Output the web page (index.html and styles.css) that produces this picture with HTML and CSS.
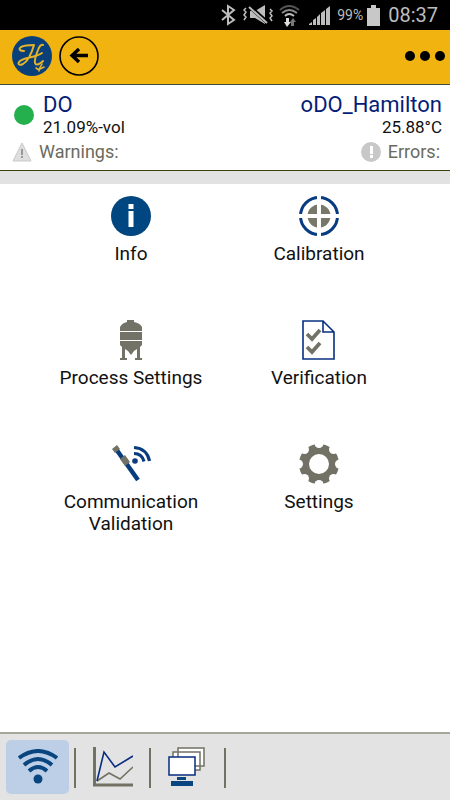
FILE: index.html
```html
<!DOCTYPE html>
<html lang="en">
<head>
<meta charset="utf-8">
<meta name="viewport" content="width=device-width, initial-scale=1">
<title>oDO_Hamilton</title>
<link rel="stylesheet" href="styles.css">
</head>
<body>
<div class="status">
  <svg width="118" height="24" viewBox="218 3 118 24" aria-hidden="true">
    <path d="M221 10l12 10-6 4V6l6 4-12 10" fill="none" stroke="#bdbdbd" stroke-width="2"/>
    <g fill="none" stroke="#bdbdbd" stroke-width="1.5">
      <path d="M245 8l-2 2 2 2-2 3 2 2-2 3M269 9l2 2-2 2 2 3-2 2 2 3"/>
    </g>
    <path d="M249 11h5l10-6v19l-10-6h-5z" fill="#bdbdbd"/>
    <path d="M248 6l19 17" stroke="#000" stroke-width="4"/>
    <path d="M248 7l18 16" stroke="#bdbdbd" stroke-width="2"/>
    <g fill="none" stroke-width="2">
      <path d="M279 10q9-8 19 0" stroke="#555"/>
      <path d="M281 13q7-6 15 0" stroke="#8a8a8a"/>
      <path d="M284 16q4-4 9 0" stroke="#bdbdbd"/>
    </g>
    <path d="M285 18h3v4h2l-4 5-3-5h2z" fill="#ddd"/>
    <path d="M290 26v-4h-1l3-4 3 4h-2v4z" fill="#777"/>
    <path d="M308 25v-1l3-2v3zM312 25v-5l3-2v7zM316 25v-8l3-3v11zM320 25V13l4-3v15zM325 25V9l4-3v19z" fill="#bdbdbd"/>
  </svg>
  <span class="percent">99%</span>
  <svg width="13" height="21" viewBox="0 0 13 21" aria-hidden="true"><path d="M4 0h5v3h4v18H0V3h4z" fill="#c8c8c8"/></svg>
  <time class="clock">08:37</time>
</div>
<header class="bar">
  <button class="round" aria-label="Home">
    <svg width="40" height="40" viewBox="0 0 40 40">
      <circle cx="20" cy="20" r="20" fill="#0a4079"/>
      <g fill="none" stroke="#e2b32b" stroke-width="2" stroke-linecap="round" stroke-linejoin="round">
        <path d="M12 15C8 15 6 13 9 11c4-2 9-2 13-2-2 7-6 16-11 19-4 2-6 0-3-3 5-4 15-3 22-8"/>
        <path d="M31 9c-2-1-4 2-5 5-2 5-4 10-3 13s5 1 8-2"/>
        <path d="M27 35c0-3 2-5 3-7M27 34l-3-2M28 33l4-2" stroke-width="1.600"/>
      </g>
    </svg>
  </button>
  <button class="round back" aria-label="Back">
    <svg width="40" height="40" viewBox="0 0 40 40">
      <circle cx="20" cy="20" r="19" fill="none" stroke="#000" stroke-width="1.6"/>
      <path d="M29 19.500H13M20 13l-7 6.500 7 6.500" fill="none" stroke="#000" stroke-width="3.400"/>
    </svg>
  </button>
  <button class="round more" aria-label="More">
    <svg width="42" height="12" viewBox="0 0 42 12"><circle cx="6" cy="6" r="5"/><circle cx="21" cy="6" r="5"/><circle cx="36" cy="6" r="5"/></svg>
  </button>
</header>
<section class="sensor">
  <div class="readings">
    <span class="dot"></span>
    <div class="value"><strong>DO</strong><span>21.09%-vol</span></div>
    <div class="value right"><strong>oDO_Hamilton</strong><span>25.88°C</span></div>
  </div>
  <div class="alerts">
    <svg width="20" height="20" viewBox="0 0 20 20" aria-hidden="true">
      <path d="M10 1l9 18H1z" fill="#dfdfdf" stroke="#c9c9c9"/><path d="M9 7h2v6H9zM9 14h2v2H9z" fill="#999"/>
    </svg>
    <span>Warnings:</span>
    <svg class="push" width="20" height="20" viewBox="0 0 20 20" aria-hidden="true">
      <circle cx="10" cy="10" r="10" fill="#c8c8c8"/><path d="M9 4h3v8H9zM9 13h3v3H9z" fill="#fff"/>
    </svg>
    <span>Errors:</span>
  </div>
</section>
<main class="menu">
  <a href="#info">
    <svg width="40" height="40" viewBox="0 0 40 40"><circle cx="20" cy="20" r="20" fill="#004681"/><path d="M17.500 8h5v5h-5zM17.500 15h5v16h-5z" fill="#fff"/></svg>
    <span>Info</span>
  </a>
  <a href="#calibration">
    <svg width="40" height="40" viewBox="0 0 40 40">
      <circle cx="20" cy="20" r="18.500" fill="none" stroke="#083c82" stroke-width="3"/>
      <circle cx="20" cy="20" r="11.500" fill="#77776a"/>
      <path d="M20 0v40M0 20h40" stroke="#fff" stroke-width="4"/>
    </svg>
    <span>Calibration</span>
  </a>
  <a href="#process">
    <svg width="40" height="40" viewBox="0 0 40 40">
      <path d="M16 0h7v2q6 1 8 5v4H9V7q2-4 7-5zM9 12h22v8H9zM9 21h22v4l-2 2v11h2v2h-7v-2h2v-9l-3 2-3 4-3-4-3-2v9h2v2H9v-2h2V27l-2-2z" fill="#727267"/>
    </svg>
    <span>Process Settings</span>
  </a>
  <a href="#verification">
    <svg width="40" height="40" viewBox="0 0 40 40">
      <path d="M4 1h20l11 11v27H4zM24 1v11h11" fill="none" stroke="#073080" stroke-width="1.6"/>
      <path d="M8 14l5 5 8-9M8 27l5 5 8-9" fill="none" stroke="#727267" stroke-width="3.800"/>
    </svg>
    <span>Verification</span>
  </a>
  <a href="#communication">
    <svg width="40" height="40" viewBox="0 0 40 40">
      <path d="M5 5l22 31" stroke="#083c7c" stroke-width="4.500"/>
      <path d="M1 5l5-4 3 4-5 4zM9 15l5-4 5 7-5 4z" fill="#727267"/>
      <circle cx="24" cy="17" r="2.800" fill="#083c7c"/>
      <path d="M23 9.500q8 0 10 8M23 3.500q13 1 15.500 13.500" fill="none" stroke="#083c7c" stroke-width="3.200"/>
    </svg>
    <span>Communication Validation</span>
  </a>
  <a href="#settings">
    <svg width="40" height="40" viewBox="0 0 40 40">
      <circle cx="20" cy="20" r="15" fill="none" stroke="#717166" stroke-width="10"/>
      <g fill="#fff">
        <circle cx="20" cy="-.5" r="4.500"/><circle cx="34.500" cy="5.500" r="4.500"/><circle cx="40.500" cy="20" r="4.500"/><circle cx="34.500" cy="34.500" r="4.500"/>
        <circle cx="20" cy="40.500" r="4.500"/><circle cx="5.500" cy="34.500" r="4.500"/><circle cx="-.5" cy="20" r="4.500"/><circle cx="5.500" cy="5.500" r="4.500"/>
      </g>
    </svg>
    <span>Settings</span>
  </a>
</main>
<nav class="tabs">
  <button class="tab active" aria-label="Measure">
    <svg width="40" height="36" viewBox="0 0 40 36">
      <g fill="none" stroke="#09457f" stroke-width="4"><path d="M1 9Q20-5 39 9M6 16q14-12 28 0M11 22q9-8 18 0"/></g>
      <circle cx="20" cy="30" r="4.500" fill="#09457f"/>
    </svg>
  </button>
  <button class="tab" aria-label="Chart">
    <svg width="40" height="40" viewBox="0 0 40 40">
      <path d="M1.500 0v38H40" fill="none" stroke="#727264" stroke-width="3"/>
      <path d="M4 34l12-8 11 6 13-12" fill="none" stroke="#727264" stroke-width="1.600"/>
      <path d="M4 34l7-29 11 15L40 9" fill="none" stroke="#082c80" stroke-width="1.600"/>
    </svg>
  </button>
  <button class="tab" aria-label="Devices">
    <svg width="40" height="40" viewBox="1 0 40 40">
      <g fill="#fff" stroke="#727264" stroke-width="1.5"><path d="M11 1h26v18H11zM6 5h27v18H6z"/></g>
      <path d="M2 10h26v18H2z" fill="#fff" stroke="#082c80" stroke-width="1.5"/>
      <path d="M10 30h9v3h-9zM4 34h22v5H4z" fill="#09457f"/>
    </svg>
  </button>
</nav>
</body>
</html>
```
FILE: styles.css
```css
* { box-sizing: border-box; }
body {
  margin: 0;
  min-height: 100vh;
  display: flex;
  flex-direction: column;
  background: #fff;
  color: #111;
  font-family: Roboto, "Liberation Sans", sans-serif;
}
svg { display: block; flex: none; }
button { border: 0; padding: 0; background: none; }
.status {
  height: 30px;
  padding: 0 12px;
  display: flex;
  align-items: center;
  justify-content: flex-end;
  background: #000;
  color: #bdbdbd;
}
.percent { font-size: 14px; margin-right: 4px; }
.clock { font-size: 20px; margin-left: 8px; }
.bar {
  height: 55px;
  padding: 0 4px 2px 12px;
  display: flex;
  align-items: center;
  gap: 7px;
  background: #f1b310;
  border-bottom: 1px solid #3c4f3c;
}
.more { margin-left: auto; }
.sensor {
  padding: 8px 8px 7px 12px;
  border-bottom: 1px solid #35430a;
}
.readings { display: flex; align-items: center; }
.dot {
  width: 20px;
  height: 20px;
  margin: 0 9px 0 2px;
  border-radius: 50%;
  background: #24b04c;
}
.value { display: flex; flex-direction: column; }
.value strong { font-size: 22px; line-height: 24px; font-weight: 400; color: #051d78; }
.value span { font-size: 17px; line-height: 20px; }
.right { margin-left: auto; text-align: right; }
.alerts {
  display: flex;
  align-items: center;
  gap: 7px;
  padding: 4px 2px 0 0;
  font-size: 18px;
  line-height: 22px;
  color: #6b6b5e;
}
.push { margin-left: auto; }
.menu {
  flex: 1;
  display: grid;
  grid-template-columns: 1fr 1fr;
  grid-auto-rows: 124px;
  padding: 12px 37px 0;
  border-top: 13px solid #e2e2e2;
}
.menu a {
  display: flex;
  flex-direction: column;
  align-items: center;
  gap: 7px;
  color: inherit;
  font-size: 19px;
  line-height: 22px;
  text-align: center;
  text-decoration: none;
}
.menu span { max-width: 150px; }
.tabs {
  display: flex;
  align-items: center;
  padding: 6px;
  background: #e3e3e3;
  border-top: 2px solid #a5a79d;
}
.tab {
  width: 63px;
  height: 54px;
  margin-right: 12px;
  display: flex;
  align-items: center;
  justify-content: center;
  border-radius: 5px;
  position: relative;
}
.tab::after {
  content: "";
  position: absolute;
  top: 8px;
  right: -7px;
  width: 2px;
  height: 40px;
  background: #727264;
}
.active { background: #bccfe7; }
```
